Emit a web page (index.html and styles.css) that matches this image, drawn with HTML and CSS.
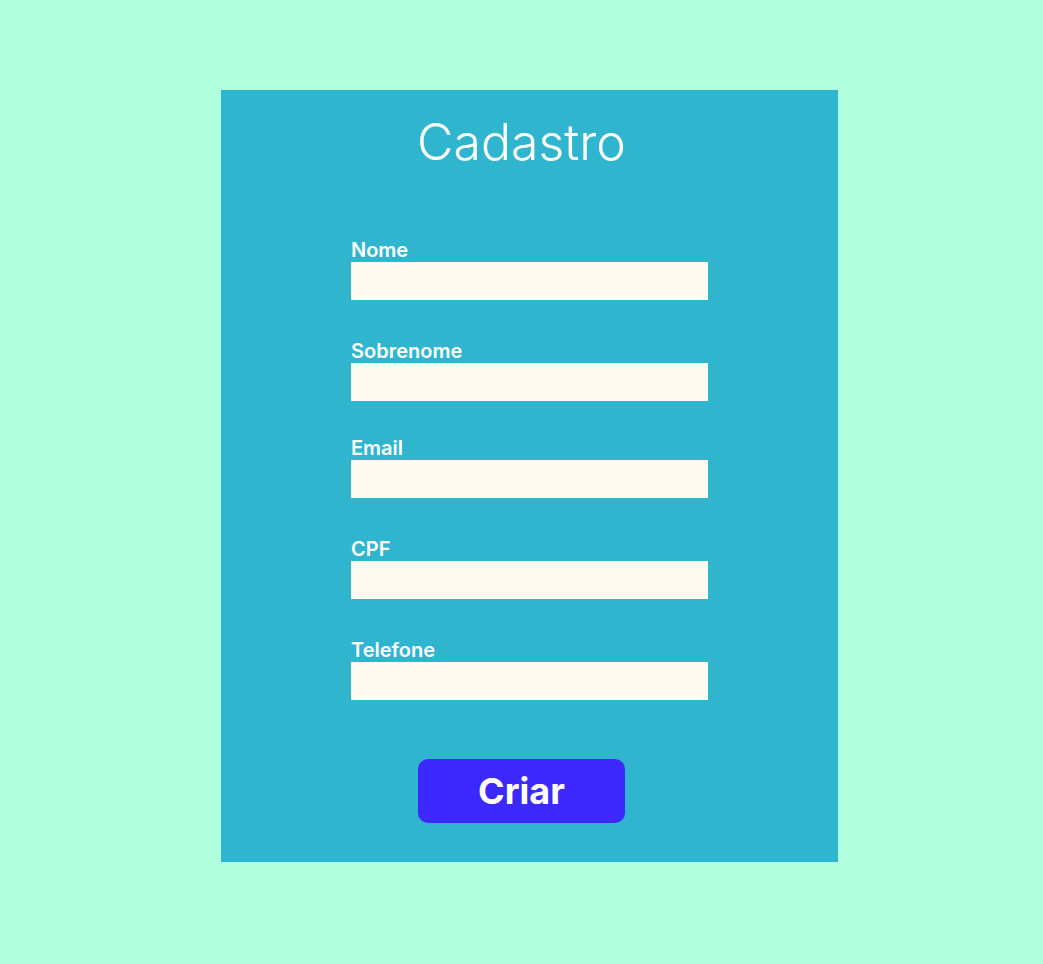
FILE: index.html
```html
<!DOCTYPE html>
<html lang="pt">
<head>
<meta charset="utf-8">
<title>Cadastro</title>
<link rel="stylesheet" href="styles.css">
</head>
<body>
<main class="card">
  <h1 class="title">Cadastro</h1>
  <form class="form">
    <div class="field">
      <label class="label" for="nome">Nome</label>
      <input class="input" id="nome" type="text">
    </div>
    <div class="field">
      <label class="label" for="sobrenome">Sobrenome</label>
      <input class="input" id="sobrenome" type="text">
    </div>
    <div class="field field-tight">
      <label class="label" for="email">Email</label>
      <input class="input" id="email" type="email">
    </div>
    <div class="field">
      <label class="label" for="cpf">CPF</label>
      <input class="input" id="cpf" type="text">
    </div>
    <div class="field">
      <label class="label" for="telefone">Telefone</label>
      <input class="input" id="telefone" type="tel">
    </div>
    <div class="actions">
      <button class="button" type="button">Criar</button>
    </div>
  </form>
</main>
</body>
</html>
```

FILE: styles.css
```css
html, body {
  margin: 0;
  padding: 0;
}
body {
  background: #b0ffdf;
  font-family: Inter, "Noto Sans", sans-serif;
  min-height: 964px;
  padding-top: 90px;
  box-sizing: border-box;
}
.card {
  margin-left: 221px;
  width: 617px;
  height: 772px;
  box-sizing: border-box;
  background: #30b5cf;
  padding: 23px 16px 0 0;
}
.title {
  margin: 0;
  text-align: center;
  color: #ffffff;
  font-weight: 300;
  font-size: 50px;
  line-height: 58px;
}
.form {
  margin: 69px 0 0 0;
  display: flex;
  flex-direction: column;
}
.field {
  margin-left: 130px;
  width: 357px;
  display: flex;
  flex-direction: column;
  margin-bottom: 41px;
}
.field-tight {
  margin-top: -4px;
}
.label {
  color: #ffffff;
  font-weight: 600;
  font-size: 20px;
  line-height: 20px;
  height: 22px;
}
.input {
  display: block;
  width: 357px;
  height: 38px;
  box-sizing: border-box;
  border: 0;
  margin: 0;
  padding: 0 8px;
  background: #fffbf3;
  outline: none;
}
.actions {
  display: flex;
  justify-content: center;
  margin-top: 18px;
}
.button {
  width: 207px;
  height: 64px;
  border: 0;
  border-radius: 10px;
  background: #3d28ff;
  color: #ffffff;
  font-family: Inter, "Noto Sans", sans-serif;
  font-weight: 700;
  font-size: 36px;
  line-height: 64px;
  padding: 0;
  cursor: pointer;
}
```
